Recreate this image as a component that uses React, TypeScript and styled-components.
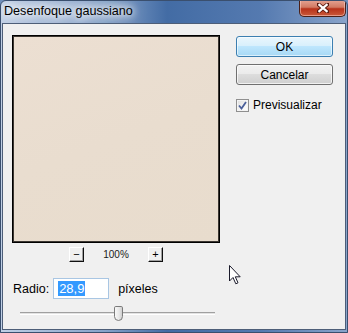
import React, { useState } from 'react'
import styled, { createGlobalStyle } from 'styled-components';

const GlobalStyle = createGlobalStyle`
  html, body {
    margin: 0;
    padding: 0;
    background: #6f8fbb;
  }
  body {
    font-family: "Segoe UI", "Liberation Sans", Arial, sans-serif;
  }
`

const App = () => {
  const [preview, setPreview] = useState<boolean>(true);
  const [radius, setRadius] = useState<string>('28,9');

  return (
    <>
      <GlobalStyle />
      <Window>
        <TitleBar>
          <Title>Desenfoque gaussiano</Title>
          <CloseButton aria-label="Cerrar">
            <svg width="12" height="10" viewBox="0 0 12 10">
              <path d="M1 1 L11 9 M11 1 L1 9" stroke="#5a1a10" strokeWidth="4" strokeLinecap="square" />
              <path d="M1.5 1.2 L10.5 8.8 M10.5 1.2 L1.5 8.8" stroke="#ffffff" strokeWidth="2.2" />
            </svg>
          </CloseButton>
        </TitleBar>

        <Client>
          <Main>
            <PreviewColumn>
              <PreviewBox />
              <ZoomRow>
                <ZoomButton>−</ZoomButton>
                <ZoomLabel>100%</ZoomLabel>
                <ZoomButton>+</ZoomButton>
              </ZoomRow>
            </PreviewColumn>

            <SideColumn>
              <DialogButton $primary>OK</DialogButton>
              <DialogButton>Cancelar</DialogButton>
              <CheckRow onClick={() => setPreview(!preview)}>
                <CheckBox>
                  {preview && (
                    <svg width="9" height="9" viewBox="0 0 9 9">
                      <path d="M1 4.5 L3.5 7.5 L8 1" fill="none" stroke="#4a5f9a" strokeWidth="1.8" />
                    </svg>
                  )}
                </CheckBox>
                <span>Previsualizar</span>
              </CheckRow>
            </SideColumn>
          </Main>

          <RadiusRow>
            <FieldLabel>Radio:</FieldLabel>
            <RadiusInput>
              <Selected>{radius}</Selected>
            </RadiusInput>
            <FieldLabel onClick={() => setRadius(radius)}>píxeles</FieldLabel>
          </RadiusRow>

          <Slider>
            <Track />
            <Thumb style={{ left: `${(28.9 / 60) * 100}%` }} />
          </Slider>
        </Client>

        <Cursor width="13" height="20" viewBox="0 0 13 20">
          <path d="M0.5 0.5 L0.5 16 L4 12.5 L6.8 18.8 L9 17.8 L6.3 11.8 L11.2 11.8 Z" fill="#ffffff" stroke="#1a1a2a" strokeWidth="1" strokeLinejoin="round" />
        </Cursor>
      </Window>
    </>
  )
}

const Window = styled.div`
  position: relative;
  width: 348px;
  height: 333px;
  display: flex;
  flex-direction: column;
  box-sizing: border-box;
  background:
    linear-gradient(90deg, rgba(200, 214, 234, 0.9) 0%, rgba(150, 176, 212, 0.6) 30%, rgba(62, 104, 162, 0.9) 48%, rgba(80, 118, 174, 0.85) 75%, rgba(140, 166, 204, 0.9) 100%),
    #6f8fbb;
  border: 1px solid #3a4f6e;
  border-radius: 6px 6px 0 0;
  overflow: hidden;
`

const TitleBar = styled.div`
  height: 22px;
  display: flex;
  justify-content: space-between;
  align-items: flex-start;
  padding: 0 1px 0 3px;
`

const Title = styled.div`
  margin-top: 3px;
  font-size: 12.6px;
  color: #000;
  text-shadow: 0 0 6px #fff, 0 0 10px #fff, 0 0 14px #fff, 0 0 18px rgba(255,255,255,0.8);
`

const CloseButton = styled.div`
  width: 45px;
  height: 16px;
  margin-top: -1px;
  display: flex;
  align-items: center;
  justify-content: center;
  border: 1px solid #4a2018;
  border-top: none;
  border-radius: 0 0 5px 5px;
  background: linear-gradient(180deg, #e6a493 0%, #d27a63 45%, #b8321a 55%, #c95a3a 100%);
  box-shadow: inset 0 0 0 1px rgba(255, 210, 200, 0.55);
`

const Client = styled.div`
  flex: 1;
  margin: 0 1px 2px 1px;
  background: #f0f0f0;
  border: 1px solid #4d5e78;
  padding: 11px 0 0 9px;
  display: flex;
  flex-direction: column;
`

const Main = styled.div`
  display: grid;
  grid-template-columns: 208px 97px;
  column-gap: 16px;
`

const PreviewColumn = styled.div`
  display: flex;
  flex-direction: column;
`

const PreviewBox = styled.div`
  width: 208px;
  height: 208px;
  box-sizing: border-box;
  border: 1px solid #000;
  box-shadow: inset 0 0 0 1px #3b3631;
  background: linear-gradient(160deg, #ecdfd2 0%, #e9ddcf 50%, #e8dccd 100%);
`

const ZoomRow = styled.div`
  margin-top: 4px;
  display: flex;
  justify-content: center;
  align-items: center;
  gap: 17px;
`

const ZoomButton = styled.div`
  width: 15px;
  height: 15px;
  box-sizing: border-box;
  display: flex;
  align-items: center;
  justify-content: center;
  font-family: "Liberation Sans", Arial, sans-serif;
  font-size: 11px;
  line-height: 1;
  color: #000;
  background: #f0f0f0;
  border-top: 1px solid #ffffff;
  border-left: 1px solid #ffffff;
  border-right: 1px solid #101010;
  border-bottom: 1px solid #101010;
  box-shadow: inset -1px -1px 0 #a0a0a0;
  padding-bottom: 1px;
`

const ZoomLabel = styled.div`
  width: 30px;
  text-align: center;
  font-family: "Liberation Sans", Arial, sans-serif;
  font-size: 10px;
  color: #1a1a1a;
`

const SideColumn = styled.div`
  padding-top: 1px;
  display: flex;
  flex-direction: column;
`

const DialogButton = styled.div<{ $primary?: boolean }>`
  height: 21px;
  box-sizing: border-box;
  margin-bottom: 7px;
  display: flex;
  align-items: center;
  justify-content: center;
  font-size: 12px;
  color: #000;
  border-radius: 3px;
  border: 1px solid ${p => (p.$primary ? '#3c7fb1' : '#707070')};
  background: ${p => p.$primary
    ? 'linear-gradient(180deg, #eaf6fd 0%, #d9f0fc 45%, #bee6fd 50%, #a7d9f5 100%)'
    : 'linear-gradient(180deg, #f2f2f2 0%, #ebebeb 45%, #dddddd 50%, #cfcfcf 100%)'};
  box-shadow: inset 0 0 0 1px ${p => (p.$primary ? 'rgba(255,255,255,0.6)' : 'rgba(255,255,255,0.7)')};
`

const CheckRow = styled.label`
  margin-top: 6px;
  display: flex;
  align-items: center;
  gap: 4px;
  font-size: 12px;
  color: #000;
  cursor: default;
`

const CheckBox = styled.span`
  width: 13px;
  height: 13px;
  box-sizing: border-box;
  display: flex;
  align-items: center;
  justify-content: center;
  border: 1px solid #8f8f8f;
  background: linear-gradient(135deg, #dcdcdc 0%, #f5f5f5 60%, #ffffff 100%);
  box-shadow: inset 0 0 0 1px #f4f4f4;
`

const RadiusRow = styled.div`
  margin-top: 16px;
  display: flex;
  align-items: center;
  padding-left: 1px;
`

const FieldLabel = styled.span`
  font-size: 12.5px;
  color: #000;
`

const RadiusInput = styled.div`
  width: 56px;
  height: 21px;
  box-sizing: border-box;
  margin: 0 9px 0 4px;
  padding: 2px 0 0 4px;
  border: 1px solid #a9c6e3;
  background: #fff;
  display: flex;
  align-items: flex-start;
`

const Selected = styled.span`
  font-size: 13px;
  line-height: 15px;
  padding: 0 1px;
  color: #fff;
  background: #3399ff;
`

const Slider = styled.div`
  position: relative;
  margin: 7px 0 0 8px;
  width: 195px;
  height: 16px;
`

const Track = styled.div`
  position: absolute;
  left: 0;
  right: 0;
  top: 6px;
  height: 3px;
  box-sizing: border-box;
  border-top: 1px solid #a0a0a0;
  border-bottom: 1px solid #ffffff;
  background: #e3e3e3;
`

const Thumb = styled.div`
  position: absolute;
  top: 0;
  width: 9px;
  height: 15px;
  box-sizing: border-box;
  border: 1px solid #7a7a7a;
  border-radius: 2px 2px 5px 5px;
  background: linear-gradient(90deg, #f8f8f8 0%, #e6e6e6 60%, #cfcfcf 100%);
`

const Cursor = styled.svg`
  position: absolute;
  left: 228px;
  top: 264px;
`

export default App;
